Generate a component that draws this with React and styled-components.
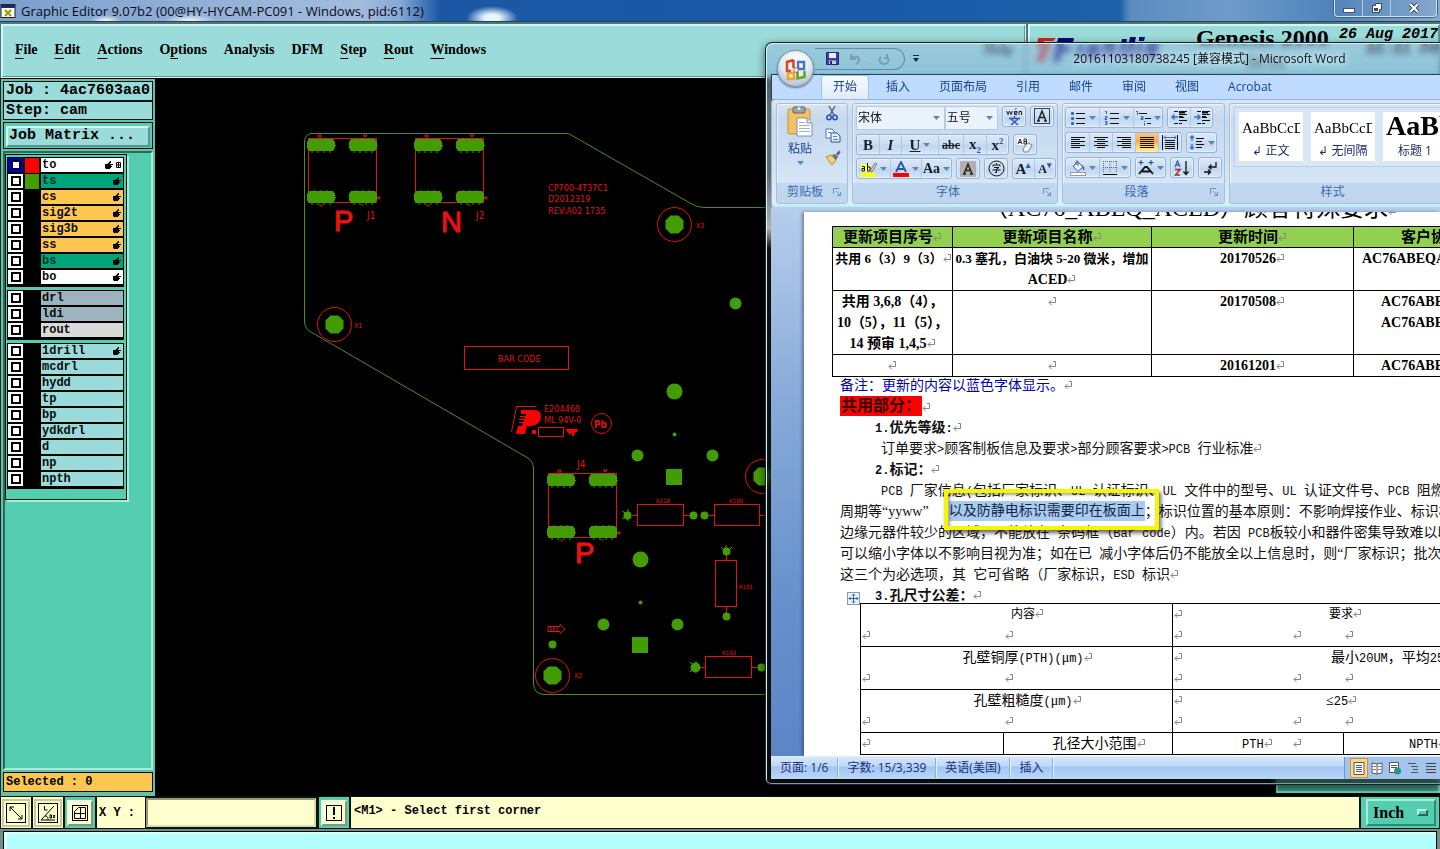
import React from 'react';
import styled, { createGlobalStyle, css } from 'styled-components';

const UI = '"Open Sans", "Noto Sans CJK SC", sans-serif';
const SERIF = '"Liberation Serif", "Noto Sans CJK SC", serif';
const MONO = '"Liberation Mono", "Noto Sans CJK SC", monospace';

const Global = createGlobalStyle`
  *, *::before, *::after { box-sizing: border-box; }
  body { margin: 0; background: #000; overflow: hidden; }
  button, input, select { font: inherit; color: inherit; margin: 0; padding: 0; border: 0; background: none; border-radius: 0; }
  h1, h2, h3, p { margin: 0; font: inherit; }
`;

/* ---------- Graphic Editor shell ---------- */

const Desktop = styled.div`
  position: relative;
  display: flex;
  flex-direction: column;
  height: 100vh;
  min-height: 600px;
  overflow: hidden;
  background: #000;
`;

const TitleBar = styled.header`
  display: flex;
  align-items: center;
  flex: none;
  height: 22px;
  gap: 5px;
  border-bottom: 1px solid #23405c;
  background:
    radial-gradient(ellipse 16px 6px at 106px 21px, #fff, transparent),
    radial-gradient(ellipse 26px 7px at 190px 21px, #f4f8fc, transparent),
    radial-gradient(ellipse 26px 12px at 492px 18px, #eaf4fc 30%, transparent),
    linear-gradient(90deg, #7ba0cd 0, #a3bcdd 25%, #86a9d6 400px, #1b57a5 440px, #1a5aa8 60%, #1c61a9 1120px, #5c8cc0 1130px, #6f9bc9 1230px, #4f83ba 1330px, #86a8cc 100%);
  font: 13px/20px ${UI};
  color: #0a0a14;
`;

const TitleText = styled.h1`
  flex: 1;
  white-space: nowrap;
`;

const WinButtons = styled.div`
  display: flex;
  align-self: flex-start;
  height: 17px;
  margin-right: 3px;
  border: 1px solid #d3e2f2;
  border-top: 0;
  border-radius: 0 0 4px 4px;
  box-shadow: 0 0 0 1px #3c608a;
`;

const WinButton = styled.button`
  display: grid;
  place-items: center;
  width: ${(p) => p.$w}px;
  border-left: ${(p) => (p.$first ? 0 : '1px solid #b4cbe3')};
`;

const MenuRow = styled.div`
  display: flex;
  flex: none;
  height: 57px;
  gap: 2px;
  background: #4d7877;
  border-bottom: 1px solid #000;
  padding: 2px 0 0 1px;
`;

const bevel = css`
  border: 2px solid;
  border-color: #d4f5f2 #5e9391 #5e9391 #d4f5f2;
`;

const MenuBar = styled.nav`
  flex: 1;
  display: flex;
  align-items: center;
  gap: 17px;
  padding: 0 11px 3px 12px;
  background: #9bdbd9;
  outline: 1px solid #d4f5f2;
  outline-offset: -1px;
  ${bevel}
  font: bold 14px/20px "Liberation Serif", serif;
`;

const MenuButton = styled.button`
  height: 20px;
  white-space: nowrap;
  margin-left: ${(p) => (p.$last ? 'auto' : 0)};
  u { text-decoration-thickness: 1px; text-underline-offset: 4px; }
`;

const Brand = styled.div`
  flex: none;
  width: 412px;
  display: grid;
  grid-template-columns: 166px 138px 1fr;
  align-items: start;
  background: #9bdbd9;
  overflow: hidden;
  ${bevel}
`;

const BrandLogo = styled.svg`
  margin: 9px 0 0 6px;
`;

const Product = styled.div`
  font: bold 24px/25px "Liberation Serif", serif;
  white-space: nowrap;
  small { display: block; font-size: 14px; line-height: 24px; text-align: center; }
`;

const Clock = styled.time`
  font: italic bold 15px/16px ${MONO};
  padding: 1px 0 0 0;
  text-align: right;
  white-space: nowrap;
`;

const Work = styled.div`
  flex: 1;
  min-height: 0;
  display: flex;
`;

const Sidebar = styled.aside`
  flex: none;
  width: 155px;
  display: flex;
  flex-direction: column;
  padding: 2px 2px 4px 2px;
  gap: 2px;
  background: #6bbfa9;
  border-left: 1px solid #0d2b24;
`;

const InfoBox = styled.div`
  flex: none;
  height: ${(p) => p.$h || 19}px;
  margin-bottom: ${(p) => (p.$joined ? -2 : 0)}px;
  padding-left: 2px;
  border: 1px solid #04140f;
  background: ${(p) => p.$bg || '#9bdbd9'};
  font: bold ${(p) => p.$size || 15}px/${(p) => (p.$h || 19) - 2}px ${MONO};
  white-space: nowrap;
  overflow: hidden;
`;

const MatrixWell = styled.div`
  flex: none;
  padding: 2px;
  height: 27px;
  border: 1px solid #04140f;
  background: #54cdb0;
`;

const MatrixButton = styled.button`
  width: 100%;
  height: 21px;
  text-align: left;
  padding-left: 1px;
  background: #9bdbd9;
  font: bold 15px/16px ${MONO};
  ${bevel}
`;

const LayerPanel = styled.div`
  flex: 1;
  min-height: 0;
  border: 2px solid;
  border-color: #2b6b5c #a5eed9 #a5eed9 #2b6b5c;
  background: #54cdb0;
  padding: 1px 0 0 0;
`;

const LayerFrame = styled.div`
  width: 122px;
  padding: 2px 2px 10px 1px;
  display: flex;
  flex-direction: column;
  gap: 3px;
  border: 1px solid #04140f;
  box-shadow: 2px 2px 0 #a5eed9;
`;

const LayerGroup = styled.ul`
  margin: 0;
  padding: 1px;
  list-style: none;
  background: #000;
`;

const LayerRow = styled.li`
  display: grid;
  grid-template-columns: 15px 14px 1fr;
  column-gap: 2px;
  height: 16px;
  padding-bottom: 1px;
`;

const LayerTick = styled.input`
  appearance: none;
  width: 15px;
  height: 14px;
  display: grid;
  place-items: center;
  background: ${(p) => (p.$on ? '#0000b8' : '#fff')};
  &::before {
    content: '';
    width: 10px;
    height: 10px;
    background: #fff;
    border: 2px solid ${(p) => (p.$on ? '#00003c' : '#000')};
  }
`;

const Swatch = styled.span`
  background: ${(p) => p.$color || '#000'};
`;

const LayerName = styled.label`
  display: flex;
  align-items: center;
  gap: 3px;
  padding: 0 2px 0 1px;
  background: ${(p) => p.$bg};
  font: bold 12px/14px ${MONO};
  color: ${(p) => (p.$dim ? '#06301f' : '#0c0c0c')};
  height: 14px;
  span { flex: 1; }
`;

const Canvas = styled.main`
  flex: 1;
  min-width: 0;
  background: #000;
  svg { display: block; }
`;

const RightPanel = styled.div`
  flex: none;
  width: 164px;
  margin-bottom: 3px;
  background: #419f8a;
  border: 2px solid #6fd3bd;
`;

const CommandBar = styled.footer`
  flex: none;
  display: flex;
  gap: 2px;
  height: 33px;
  padding: 1px 1px 1px 1px;
  background: #04140f;
  font: bold 12px/28px ${MONO};
`;

const Tool = styled.button`
  width: 30px;
  display: grid;
  place-items: center;
  background: ${(p) => (p.$teal ? '#54cdb0' : '#ffffcd')};
  svg {
    box-sizing: content-box;
    padding: 1px;
    background: #ffffcd;
    border: 2px solid;
    border-color: ${(p) => (p.$teal ? '#e6ffe6 #7f9a78 #7f9a78 #e6ffe6' : '#c8c898')};
  }
`;

const XYField = styled.label`
  display: flex;
  align-items: center;
  gap: 10px;
  padding-left: 2px;
  background: #ffffcd;
  white-space: pre;
`;

const XYInput = styled.input`
  width: 172px;
  height: 31px;
  padding: 0 6px;
  border: 3px solid;
  border-color: #98987a #dcdcb0 #dcdcb0 #98987a;
  outline: 1px solid #04140f;
  outline-offset: -1px;
  background: #ffffcd;
`;

const Message = styled.output`
  flex: 1;
  min-width: 0;
  background: #ffffcd;
  padding-left: 3px;
  white-space: nowrap;
`;

const UnitWell = styled.div`
  flex: none;
  width: 78px;
  background: #54cdb0;
  padding: 2px 3px 2px 5px;
`;

const UnitBox = styled.div`
  display: flex;
  align-items: center;
  height: 27px;
  padding-right: 6px;
  border: 2px solid;
  border-color: #a5eed9 #2b8a72 #2b8a72 #a5eed9;
  &::after {
    content: '';
    width: 11px;
    height: 7px;
    border: 2px solid;
    border-color: #b9f5e4 #1f6b58 #1f6b58 #b9f5e4;
  }
`;

const UnitSelect = styled.select`
  flex: 1;
  min-width: 0;
  appearance: none;
  padding-left: 5px;
  font: bold 16px/20px "Liberation Serif", serif;
`;

const BottomStrip = styled.div`
  flex: none;
  height: 20px;
  padding: 2px 3px 0 3px;
  background: #6f8f8f;
  div {
    height: 18px;
    border: solid #000;
    border-width: 1px 1px 0 1px;
    box-shadow: inset 3px 2px 0 #dcffff;
    background: #b3fffe;
  }
`;

/* ---------- Word window ---------- */

const WordWindow = styled.section`
  position: absolute;
  left: 765px;
  right: 0;
  top: 42px;
  bottom: 64px;
  display: flex;
  flex-direction: column;
  padding: 0 0 5px 5px;
  overflow: hidden;
  border: 1px solid #18222a;
  border-right: 0;
  border-radius: 7px 0 0 6px;
  box-shadow: inset 1px 1px 0 #d8f2f6, inset 0 -1px 0 #8c979c, 0 3px 8px rgba(0, 0, 0, .6);
  background: linear-gradient(180deg, rgba(150, 185, 220, .5) 0, rgba(130, 175, 220, .5) 30px, rgba(110, 122, 122, .9) 70px, rgba(105, 115, 115, .9) 130px, rgba(190, 200, 200, .9) 185px, rgba(14, 20, 22, .8) 206px, rgba(14, 20, 22, .6) 100%);
  backdrop-filter: blur(3px);
  font: 12px/16px ${UI};
  color: #15428b;
`;

const WordTitle = styled.div`
  flex: none;
  display: flex;
  align-items: center;
  height: 31px;
  padding-left: 44px;
`;

const QuickBar = styled.div`
  display: flex;
  align-items: center;
  gap: 10px;
  width: 90px;
  height: 22px;
  padding-left: 11px;
  border: 1px solid rgba(60, 95, 125, .55);
  border-left: 0;
  border-radius: 0 11px 11px 0;
  button { display: grid; }
`;

const WordCaption = styled.h2`
  flex: 1;
  padding-left: 54px;
  text-align: center;
  white-space: nowrap;
  color: #06121c;
  text-shadow: 0 0 6px rgba(255, 255, 255, .9), 0 0 10px rgba(255, 255, 255, .8);
`;

const OfficeButton = styled.button`
  position: absolute;
  left: 11px;
  top: 7px;
  width: 37px;
  height: 37px;
  display: grid;
  place-items: center;
  border-radius: 50%;
  border: 1px solid #7d8fa6;
  background: radial-gradient(circle at 50% 30%, #fff 0, #e8edf4 45%, #b4c2d4 80%, #eef3f9 100%);
  box-shadow: 0 1px 2px rgba(0, 0, 0, .5);
`;

const Tabs = styled.nav`
  flex: none;
  display: flex;
  height: 25px;
  padding: 0 0 0 49px;
  gap: 5px;
  border-top: 1px solid #23424c;
  border-left: 1px solid #23424c;
  background: #bfdbff;
`;

const Tab = styled.button`
  height: 24px;
  padding: 0 11px 2px;
  border: 1px solid ${(p) => (p.$active ? '#9dc3f2' : 'transparent')};
  border-bottom: 0;
  border-radius: 3px 3px 0 0;
  background: ${(p) => (p.$active ? 'linear-gradient(#f6faff, #dfebf9)' : 'none')};
  color: #15428b;
  white-space: nowrap;
`;

const Ribbon = styled.div`
  flex: none;
  display: flex;
  gap: 4px;
  height: 108px;
  padding: 3px 0 3px 4px;
  border: 1px solid #8db2e3;
  border-right: 0;
  border-bottom: 2px solid #b9f0fa;
  border-radius: 4px 0 0 4px;
  background: linear-gradient(#dbe7f5, #c6d9ee 18%, #cfe0f3 60%, #e0edfa);
`;

const Group = styled.section`
  flex: ${(p) => (p.$w ? 'none' : '1')};
  width: ${(p) => (p.$w ? p.$w + 'px' : 'auto')};
  min-width: 0;
  height: 101px;
  display: flex;
  flex-direction: column;
  overflow: hidden;
  border: 1px solid #a5bfdf;
  border-right-width: ${(p) => (p.$w ? 1 : 0)}px;
  border-radius: ${(p) => (p.$w ? '3px' : '3px 0 0 3px')};
  box-shadow: inset 1px 1px 0 rgba(255, 255, 255, .6);
`;

const GroupBody = styled.div`
  flex: 1;
  display: flex;
  flex-direction: ${(p) => (p.$col ? 'column' : 'row')};
  gap: ${(p) => p.$gap || 0}px;
  padding: ${(p) => p.$pad || '2px 3px 0'};
`;

const GroupLabel = styled.div`
  flex: none;
  display: flex;
  align-items: center;
  height: 20px;
  padding: 0 5px 2px 0;
  background: linear-gradient(#c0d8f1, #bfd5ee);
  color: #3e6aaa;
  h3 { flex: 1; text-align: center; white-space: nowrap; }
`;

const Tools = styled.div`
  display: flex;
  gap: 4px;
  height: ${(p) => p.$h || 21}px;
`;

const BtnSet = styled.div`
  flex: none;
  display: flex;
  height: 21px;
  border: 1px solid #94b4da;
  border-radius: 3px;
  background: linear-gradient(#dbe8f8, #cbdef3 48%, #bfd5ef 52%, #d3e5f8);
  box-shadow: inset 0 0 0 1px rgba(255, 255, 255, .45);
  overflow: hidden;
`;

const Btn = styled.button`
  display: flex;
  align-items: center;
  justify-content: center;
  gap: 3px;
  width: ${(p) => p.$w || 22}px;
  height: 19px;
  border-left: 1px solid #afc8e6;
  background: ${(p) => (p.$on ? 'linear-gradient(#fdc98a, #fba644 45%, #fec96c 60%, #fff0a0)' : 'none')};
  color: #1c1c24;
  font: ${(p) => p.$font || 'bold 15px/18px "Liberation Serif", serif'};
  &:first-child { border-left: 0; }
  sub, sup { font-size: 9px; line-height: 8px; color: #2a5bb0; }
`;

const Combo = styled.div`
  display: flex;
  align-items: center;
  width: ${(p) => p.$w}px;
  height: 24px;
  padding-right: 4px;
  margin-right: ${(p) => (p.$join ? -4 : 0)}px;
  border: 1px solid #b3cbe9;
  background: #eaf2fb;
  color: #111;
`;

const ComboSelect = styled.select`
  flex: 1;
  min-width: 0;
  appearance: none;
  padding-left: 1px;
  line-height: 18px;
`;

const PasteButton = styled.button`
  width: 46px;
  display: flex;
  flex-direction: column;
  align-items: center;
  gap: 4px;
  color: #15428b;
`;

const SideTools = styled.div`
  display: flex;
  flex-direction: column;
  gap: 5px;
  button { display: grid; height: 17px; }
`;

const Gallery = styled.div`
  flex: 1;
  display: flex;
  gap: 8px;
  height: 60px;
  padding: 4px;
  border: 1px solid #b9cfec;
  border-right: 0;
  background: #d9e6f6;
  overflow: hidden;
`;

const StyleCard = styled.button`
  flex: none;
  width: 64px;
  height: 49px;
  display: flex;
  flex-direction: column;
  align-items: center;
  background: #fff;
  overflow: hidden;
  color: #1c2b6b;
  b {
    width: 58px;
    height: 29px;
    overflow: hidden;
    text-align: left;
    white-space: nowrap;
    color: #000;
    font: ${(p) => (p.$big ? 'bold 28px/28px' : '15px/32px')} "Liberation Serif", serif;
  }
  span { white-space: nowrap; line-height: 19px; }
`;

const Viewport = styled.div`
  flex: 1;
  min-height: 0;
  display: flex;
  padding: 5px 0 0 33px;
  overflow: hidden;
  background: linear-gradient(180deg, #b6cdec 0, #a9c3e6 60px, #86a9d8 200px, #6690cb 400px, #5b85c6 100%);
`;

const Page = styled.article`
  flex: 1;
  min-width: 0;
  padding-left: 36px;
  overflow: hidden;
  background: #fff;
  box-shadow: -2px 0 3px rgba(30, 50, 90, .45);
  color: #000;
  font: 14px/21px ${SERIF};
`;

const DocTitle = styled.h2`
  height: 36px;
  margin-top: -22px;
  padding-left: 144px;
  font: 24px/36px ${SERIF};
  white-space: nowrap;
`;

const Line = styled.p`
  height: 21px;
  padding-left: ${(p) => p.$indent || 0}px;
  white-space: nowrap;
  font-weight: ${(p) => (p.$bold ? 'bold' : 'normal')};
  font-size: ${(p) => (p.$size || 14)}px;
  color: ${(p) => p.$color || '#111'};
`;

const Half = styled.span`
  font-family: ${MONO};
  font-size: 12px;
  line-height: 12px;
  white-space: pre;
`;

const RedMark = styled.mark`
  display: inline-block;
  height: 20px;
  line-height: 20px;
  padding: 0 1px;
  background: #f00;
  color: #2c0000;
  vertical-align: top;
`;

const Selected = styled.span`
  position: relative;
  display: inline-block;
  height: 20px;
  line-height: 20px;
  margin-left: 20px;
  background: #a9cbee;
  color: #10264a;
  vertical-align: top;
  &::after {
    content: '';
    position: absolute;
    inset: -12px -14px -9px -5px;
    border: 4px solid #f6f600;
    box-shadow: 2px 3px 4px rgba(0, 0, 0, .6), inset 2px 2px 3px rgba(0, 0, 0, .35);
  }
`;

const RevTable = styled.table`
  table-layout: fixed;
  width: 700px;
  margin: 0 0 -2px -8px;
  border-collapse: collapse;
  text-align: center;
  font-weight: bold;
  th, td { padding: 0; border: 1px solid #000; vertical-align: top; white-space: nowrap; }
  th { height: 20px; line-height: 20px; font-size: 15px; background: #92d050; }
  td:last-child, th:last-child { text-align: left; }
`;

const Col = styled.col`
  width: ${(p) => p.$w}px;
`;

const Pad = styled.div`
  padding-left: ${(p) => p.$x || 0}px;
  font-size: ${(p) => p.$size || 14}px;
`;

const SpecTable = styled.table`
  table-layout: fixed;
  width: 640px;
  margin-left: 20px;
  border-collapse: collapse;
  td { padding: 0; border: 1px solid #000; vertical-align: top; white-space: nowrap; }
`;

const CellGrid = styled.div`
  display: grid;
  grid-template-columns: ${(p) => p.$cols};
  padding-left: 1px;
  line-height: 21px;
  height: 21px;
`;

const CellText = styled.div`
  height: 21px;
  text-align: center;
  padding-left: 22px;
  font-size: ${(p) => p.$size || 14}px;
`;

const HeadingRow = styled.div`
  display: flex;
  align-items: center;
  gap: 15px;
  padding-left: 7px;
  height: 21px;
  margin-bottom: -3px;
  svg { margin-top: 6px; }
`;

const StatusBar = styled.div`
  flex: none;
  display: flex;
  align-items: center;
  height: 23px;
  border-top: 1px solid #e4effd;
  background: linear-gradient(#d6e6fb, #c0d8f8 40%, #a5c6f2 45%, #b9d5fa);
  color: #15307a;
`;

const StatusItem = styled.span`
  padding: 0 9px;
  line-height: 20px;
  border-right: 1px solid #8fb0de;
  box-shadow: 1px 0 0 #e4effd;
  white-space: nowrap;
`;

const Views = styled.div`
  display: flex;
  align-items: center;
  margin-left: auto;
  padding-left: 5px;
  height: 22px;
  border-left: 1px solid #6f95cc;
  background: #a4c3ee;
`;

const ViewButton = styled.button`
  display: grid;
  place-items: center;
  width: 18px;
  height: 20px;
  border: 1px solid ${(p) => (p.$on ? '#c79443' : 'transparent')};
  background: ${(p) => (p.$on ? '#ffd78a' : 'none')};
`;

/* ---------- small drawings ---------- */

const Svg = ({ w = 16, h = 16, children, ...rest }) => (
  <svg width={w} height={h} viewBox={`0 0 ${w} ${h}`} fill="none" aria-hidden="true" {...rest}>{children}</svg>
);

const Arrow = () => <Svg w={7} h={4}><path d="M0 0h7L3.500 4z" fill="#5d84b8" /></Svg>;

const Launcher = () => (
  <Svg w={9} h={9}><path d="M.5 6V.5H6M3 3l4 4M7.500 4v3.500H4" stroke="#6c8fbf" /></Svg>
);

const Ret = () => (
  <svg width="9" height="9" viewBox="0 0 9 9" fill="none" aria-hidden="true">
    <path d="M5 .5h2.500v5H1M3.500 3L1 5.500 3.500 8" stroke="#858585" />
  </svg>
);

const Hand = () => (
  <Svg w={8} h={8}><path d="M0 3h2l2-1.500L5 0h1v2H5v1h3v1H6v1h1v1H6v1H5v1H1L0 7z" fill="#000" /></Svg>
);

const bars = (ys, c = '#111') => ys.map(([x1, x2, y]) => <path key={y + '-' + x1} d={`M${x1} ${y}.5H${x2}`} stroke={c} />);

const BulletIcon = () => (
  <Svg>{[2, 7, 12].map((y) => <rect key={y} x="1" y={y} width="3" height="3" rx="1" fill="#3a64a8" />)}{bars([[6, 15, 3], [6, 15, 8], [6, 15, 13]])}</Svg>
);
const NumberIcon = () => (
  <Svg><path d="M1 1.500h1.500V4M1 6.500h2v1.500H1v1.500h2M1 11.500h2v3H1M1 13h2" stroke="#3a64a8" />{bars([[6, 15, 3], [6, 15, 8], [6, 15, 13]])}</Svg>
);
const MultiIcon = () => (
  <Svg><path d="M1 1.500h1.500V5M6 6.500h2v3H6V8h2M9.500 11v1M9.500 13v2.500" stroke="#3a64a8" />{bars([[4, 12, 3], [10, 16, 8], [12, 16, 13]])}</Svg>
);
const IndentIcon = ({ right }) => (
  <Svg>{bars([[3, 7, 1], [8, 16, 1], [8, 16, 4], [8, 13, 7], [8, 16, 10], [3, 7, 13], [8, 11, 13]])}
    <path d="M8 2.500h6M8 7h4" stroke="#111" strokeWidth="2" />
    <path d={right ? 'M0 7h6M3.500 4.500L6 7 3.500 9.500' : 'M7 7H1M3.500 4.500L1 7l2.500 2.500'} stroke="#3a6fc8" strokeWidth="1.500" /></Svg>
);
const AlignIcon = ({ kind }) => {
  const map = {
    left: [[1, 15, 2], [1, 10, 4], [1, 15, 6], [1, 10, 8], [1, 15, 10], [1, 10, 12]],
    center: [[1, 15, 2], [4, 12, 4], [1, 15, 6], [4, 12, 8], [1, 15, 10], [4, 12, 12]],
    right: [[1, 15, 2], [6, 15, 4], [1, 15, 6], [6, 15, 8], [1, 15, 10], [6, 15, 12]],
    full: [[1, 15, 2], [1, 15, 4], [1, 15, 6], [1, 15, 8], [1, 15, 10], [1, 15, 12]],
    spread: [[3, 13, 5], [3, 13, 7], [3, 13, 9], [3, 13, 11], [3, 13, 13]],
  };
  return (
    <Svg>{bars(map[kind])}
      {kind === 'spread' && <path d="M.5 0v15M15.500 0v15" stroke="#111" />}
      {kind === 'spread' && <path d="M2 2.500h12M4 .5l-2 2 2 2M12 .5l2 2-2 2" stroke="#3a6fc8" />}
    </Svg>
  );
};
const SpacingIcon = () => (
  <Svg>{bars([[7, 15, 3], [7, 13, 6], [7, 15, 9], [7, 13, 12]])}<path d="M3 1v5M1 3l2-2 2 2M3 9v5M1 12l2 2 2-2" stroke="#3a6fc8" strokeWidth="1.500" /></Svg>
);
const BucketIcon = () => (
  <Svg><path d="M3 6l5-4 5 5-5 4.500z" fill="#e8eef8" stroke="#3f5f90" /><path d="M6 5V1.500c1-1 2-.5 2 .5v4" stroke="#3f5f90" /><path d="M12 5c2 1 3 3 2 6-1-2-2-3-2-6z" fill="#2f68c0" /><rect x=".5" y="12.500" width="15" height="3" fill="#fff" stroke="#999" /></Svg>
);
const BorderIcon = () => (
  <Svg><path d="M1.500 1v12M8 1v12M14.500 1v12M1 1.500h14M1 7.500h14" stroke="#667" strokeDasharray="1 1" /><path d="M1 14.500h14" stroke="#111" /></Svg>
);
const AsianIcon = () => (
  <Svg><path d="M1 14l6-7h2l6 7M4 11.500h8" stroke="#111" strokeWidth="1.800" /><path d="M3 0v5M.5 2.500h5M13 0v5M10.500 2.500h5" stroke="#1a3fae" /></Svg>
);
const SortIcon = () => (
  <Svg><path d="M1 7l2.500-6L6 7M2 5h3" stroke="#2f5fc0" strokeWidth="1.300" /><path d="M1 9.500h5L1.500 15H6" stroke="#b02828" strokeWidth="1.500" /><path d="M12 1v13M9.500 11.500L12 14.500l2.500-3" stroke="#111" strokeWidth="1.300" /></Svg>
);
const MarksIcon = () => (
  <Svg><path d="M14 2v5H7M9.500 4.500L7 7l2.500 2.500M2 12h6M6 9.500L8.500 12 6 14.500" stroke="#111" strokeWidth="1.300" /></Svg>
);
const EraserIcon = () => (
  <Svg><path d="M0 1h11v7H0z" fill="#fff" /><path d="M1 7l2-5 2 5M2 5.500h2M7 2v5h2.500V2zM7 4.500h2" stroke="#223" /><path d="M6 12l5-6 4 2-4 7H7z" fill="#f2f4fa" stroke="#7084a8" /></Svg>
);
const HighlightIcon = () => (
  <Svg><path d="M0 3h9v8H0z" fill="#ff6" /><path d="M1 5.500h2.500V10H1V7.500h2.500M6.500 2v8H9V6H6.500" stroke="#111" /><path d="M9 10l5-8 2 1-5 8z" fill="#c9d2e2" stroke="#556" strokeWidth=".7" /><path d="M0 12h15v4H0z" fill="#ff0" /></Svg>
);
const FontColorIcon = () => (
  <Svg><path d="M3 11L8 1l5 10M5 8h6" stroke="#2c55a0" strokeWidth="1.800" /><path d="M0 12h16v4H0z" fill="#f00" /></Svg>
);
const PhoneticIcon = () => (
  <Svg w={17} h={18}><path d="M.5 3l1.500 3.500 1.500-3.500L5 6.500 6.500 3M11 6.500H8.500v-3H11V5H8.500M9 1.500L10.500 0M13 7V3.500h2.500V7" stroke="#222" /><path d="M8.500 8v2M3 10.500h11M5 11l7 6M12 11l-7 6" stroke="#2c5ac4" strokeWidth="1.500" /></Svg>
);
const CircleCharIcon = () => (
  <Svg w={17} h={17}><circle cx="8.500" cy="8.500" r="7.500" stroke="#111" /><path d="M8.500 3v1.500M5 6.500V5h7v1.500M6 7.500h5L8.500 9v3.500H7M4.500 10h8" stroke="#111" /></Svg>
);
const PasteIcon = () => (
  <Svg w={26} h={31}>
    <rect x="1" y="3" width="22" height="25" rx="1.500" fill="#f2c263" stroke="#c1913a" />
    <rect x="6" y="1" width="12" height="6" rx="1" fill="#9aa3ad" stroke="#5c646d" /><circle cx="12" cy="2.500" r="1.500" fill="#eee" />
    <path d="M10 12h10l5 5v13H10z" fill="#fff" stroke="#7d90b0" /><path d="M20 12v5h5" fill="#dde7f5" stroke="#7d90b0" />
    {bars([[12, 18, 16], [12, 23, 19], [12, 23, 22], [12, 23, 25]], '#9fb3d2')}
  </Svg>
);
const CutIcon = () => (
  <Svg w={15} h={15}><path d="M4 0l5 9M10 0L5 9" stroke="#52657f" strokeWidth="1.500" /><circle cx="4" cy="11.500" r="2.200" stroke="#2454b8" strokeWidth="1.600" /><circle cx="10" cy="11.500" r="2.200" stroke="#2454b8" strokeWidth="1.600" /></Svg>
);
const CopyIcon = () => (
  <Svg w={16} h={15}><path d="M1 1h6l2 2v7H1z" fill="#fff" stroke="#4c6fae" /><path d="M6 5h6l3 3v6H6z" fill="#eaf2fd" stroke="#2454b8" />{bars([[3, 6, 4], [8, 12, 8], [8, 13, 11]], '#4c7fd0')}</Svg>
);
const BrushIcon = () => (
  <Svg w={16} h={15}><path d="M1 7l5-2 5 5-4 5z" fill="#f3d36e" stroke="#b48a24" /><path d="M7 5l3-1 3 3-2 3z" fill="#6c6c74" /><path d="M11 4l3-3.500L15.500 2 13 6z" fill="#5a4fa8" /></Svg>
);
const SaveIcon = () => (
  <Svg w={13} h={13}><path d="M.5.5h12v12H.5z" fill="#3d3fa8" stroke="#26286e" /><path d="M3 1h7v5H3z" fill="#eef" /><path d="M3 8.500h7V12H3z" fill="#c8ccdf" /><path d="M4 9h2v3H4z" fill="#26286e" /></Svg>
);
const UndoIcon = () => <Svg w={19} h={12}><path d="M2 1v5h5M2 6c3-4 8-3 8 1 0 2-1 3-3 4" stroke="#7d9cb8" strokeWidth="2" /><path d="M14 5h5l-2.500 3z" fill="#a9c6dc" /></Svg>;
const RedoIcon = () => <Svg w={12} h={12}><path d="M9 1v4H6M9 4c3 3 1 7-3 7S0 7 3 4" stroke="#7d9cb8" strokeWidth="2" /></Svg>;
const OfficeLogo = () => (
  <Svg w={24} h={26}>
    <path d="M9.500 4L3 6v9h4M9.500 4v8" stroke="#d8481c" strokeWidth="2.600" />
    <path d="M14 6h6v7h-6z" stroke="#3b78c6" strokeWidth="2.400" />
    <path d="M4 17h6v6H4z" stroke="#f0a51c" strokeWidth="2.400" />
    <path d="M13.500 15.500v7l7-1.500v-6" stroke="#5fa52c" strokeWidth="2.600" />
    <path d="M10 12h4v4h-4z" fill="#fff" stroke="#c44" strokeWidth=".8" />
  </Svg>
);
const EditorIcon = () => (
  <Svg w={16} h={14}><rect x="1" y=".5" width="14" height="13" fill="#fffff0" stroke="#222" /><path d="M1 1h14v3H1z" fill="#1d2a66" /><path d="M5 6l6 6M11 6l-6 6" stroke="#9a9a10" strokeWidth="2" /></Svg>
);
const SnapIcon = () => <Svg w={22} h={22}><rect x="1.500" y="1.500" width="19" height="19" stroke="#000" /><path d="M5 5l12 12M5 9V5h4M17 13v4h-4" stroke="#000" /></Svg>;
const AngleIcon = () => <Svg w={22} h={22}><rect x="1.500" y="1.500" width="19" height="19" stroke="#000" /><path d="M4 18L17 4M4 18h14M7.500 4v4h3M8 14c3 0 3 2 3 4M13 13h1.500v3H13zM16 13l2 3M18 13l-2 3" stroke="#000" /></Svg>;
const GridIcon = () => <Svg w={20} h={20}><rect x="2.500" y="2.500" width="15" height="15" stroke="#000" /><path d="M4.500 8.500l4-4h7v11h-11zM10.500 4v11M4 10.500h12" stroke="#000" /></Svg>;
const BangIcon = () => <Svg w={20} h={20}><rect x="2.500" y="2.500" width="15" height="15" stroke="#000" /><path d="M10 4v8M10 14v2" stroke="#000" strokeWidth="2" /></Svg>;

/* ---------- board drawing ---------- */

const RED = '#e01414';
const GREEN = '#449c04';

const BoardText = styled.text`
  font-family: "DejaVu Sans Condensed", "DejaVu Sans", sans-serif;
  font-size: ${(p) => p.$size}px;
  font-weight: ${(p) => (p.$bold ? 'bold' : 'normal')};
  fill: ${RED};
`;

const BoardLetter = styled.text`
  font: 29px "Liberation Sans", sans-serif;
  fill: #f01010;
  stroke: #f01010;
  stroke-width: 1px;
`;

const PadShape = ({ x, y }) => (
  <g fill={GREEN}>
    <path d={`M${x - 12} ${y - 6}h24l2 3v6l-2 3h-24l-2 -3v-6z`} />
    <path d={`M${x - 9} ${y}v8M${x - 3} ${y}v8M${x + 3} ${y}v8M${x + 9} ${y}v8M${x - 14} ${y + 0.5}h29M${x - 7} ${y - 7}v3M${x} ${y - 7}v3M${x + 6} ${y - 7}v3`} stroke={GREEN} />
  </g>
);

const Connector = ({ x, y }) => (
  <g>
    <rect x={x + 0.5} y={y + 0.5} width="68" height="64" fill="none" stroke={RED} />
    <path d={`M${x + 10} ${y - 3}h3v2h-3zM${x + 55} ${y - 3}h4l-2 2zM${x + 11} ${y + 67}h3v2M${x + 53} ${y + 67}h3M${x + 70} ${y + 59}h2v2h-2z`} stroke={RED} fill="none" />
    {[[13, 7], [55, 7], [13, 59], [55, 59]].map(([a, b]) => <PadShape key={`${a}-${b}`} x={x + a} y={y + b} />)}
  </g>
);

const Hole = ({ x, y }) => (
  <g>
    <circle cx={x + 0.5} cy={y + 0.5} r="17" fill="none" stroke={RED} />
    <path d={`M${x - 3.5} ${y - 8.5}h8l5 5v8l-5 5h-8l-5 -5v-8z`} fill={GREEN} />
  </g>
);

const dots = [[735, 303, 6], [674, 391, 8], [674, 434, 2], [637, 455, 6], [712, 455, 6], [640, 559, 8], [640, 602, 2], [603, 624, 6], [677, 624, 6], [552, 644, 4], [627, 515, 4], [693, 515, 4], [704, 515, 4], [726, 551, 4], [726, 616, 4], [695, 667, 5], [761, 667, 4]];

const Board = () => (
  <svg width="100%" height="100%" aria-label="PCB layout">
    <g transform="translate(-155 -79)">
      <path d="M311 133.500H568.500L690 203Q697 207.500 704 207.500H1200M311 133.500Q304.500 135 304.500 142V322Q305 329 311 332L527 457.500Q533.500 461 533.500 469V684Q534 694.500 545 694.500H1200" fill="none" stroke="#4c8c24" />
      <Connector x={308} y={138} />
      <Connector x={415} y={138} />
      <Connector x={548} y={473} />
      <Hole x={674} y={224} />
      <Hole x={334} y={324} />
      <Hole x={552} y={675} />
      <Hole x={762} y={476} />
      <g fill={GREEN}>
        {dots.map(([x, y, r]) => <circle key={`${x}-${y}`} cx={x + 0.5} cy={y + 0.5} r={r} />)}
        <rect x="666" y="469" width="16" height="16" />
        <rect x="632" y="637" width="16" height="16" />
        <path d="M622 511l3 2M622 519l3-2M628 509v12M721 547l3 3M732 547l-3 3M726 545v3M690 662l3 3M690 672l3-3M696 661v12" stroke={GREEN} />
      </g>
      <g fill="none" stroke={RED}>
        <rect x="464.500" y="346.500" width="104" height="23" />
        <rect x="637.500" y="504.500" width="46" height="21" />
        <rect x="714.500" y="504.500" width="45" height="21" />
        <rect x="715.500" y="560.500" width="21" height="46" />
        <rect x="705.500" y="656.500" width="46" height="21" />
        <path d="M632 515.500h5M684 515.500h6M708 515.500h6M760 515.500h6M726.500 555v5M726.500 607v6M700 667.500h5M752 667.500h6" />
        <path d="M511.500 432l5-25.500h20" />
        <circle cx="601.500" cy="423.500" r="10" />
        <rect x="538.500" y="427.500" width="25" height="9" />
        <path d="M548 626.500h12v-2l5 4.500-5 4.500v-2h-12zM551 627v4M554 627v4M557 627v4" />
      </g>
      <path d="M521 410h13q7 0 7 6 0 9-10 10h-4l-2 8h-9l2-8h4l1-3h-4v-1h5v-2h-5v-1h6v-2h-5v-1h6v-2h-5z" fill="#f00" />
      <path d="M532 430h4v4h-4zM566 429h12l-1 3h-2l-1 4h-2v-4l-2 3-4-5z" fill="#f00" />
      <BoardLetter x="334" y="231">P</BoardLetter>
      <BoardLetter x="441" y="232">N</BoardLetter>
      <BoardLetter x="575" y="563">P</BoardLetter>
      <BoardText x="367" y="219" $size={10}>J1</BoardText>
      <BoardText x="476" y="219" $size={10}>J2</BoardText>
      <BoardText x="577" y="468" $size={10}>J4</BoardText>
      <BoardText x="548" y="191" $size={9}>CP700-4T37C1</BoardText>
      <BoardText x="548" y="202" $size={9}>D2012319</BoardText>
      <BoardText x="548" y="214" $size={9}>REV:A02 1735</BoardText>
      <BoardText x="498" y="362" $size={9}>BAR CODE</BoardText>
      <BoardText x="544" y="412" $size={9}>E204460</BoardText>
      <BoardText x="544" y="423" $size={9}>ML 94V-0</BoardText>
      <BoardText x="594" y="428" $size={10} $bold>Pb</BoardText>
      <BoardText x="696" y="228" $size={7}>X3</BoardText>
      <BoardText x="354" y="328" $size={7}>X1</BoardText>
      <BoardText x="574" y="678" $size={7}>X2</BoardText>
      <BoardText x="656" y="503" $size={6}>R218</BoardText>
      <BoardText x="729" y="503" $size={6}>R189</BoardText>
      <BoardText x="739" y="589" $size={6}>R151</BoardText>
      <BoardText x="722" y="655" $size={6}>R193</BoardText>
    </g>
  </svg>
);

/* ---------- content ---------- */

const layers = [
  [
    { name: 'to', bg: '#fff', color: '#f00', on: true, hand: true, grid: true },
    { name: 'ts', bg: '#00a57c', color: '#449c04', hand: true, dim: true },
    { name: 'cs', bg: '#fdc74f', hand: true },
    { name: 'sig2t', bg: '#fdc74f', hand: true },
    { name: 'sig3b', bg: '#fdc74f', hand: true },
    { name: 'ss', bg: '#fdc74f', hand: true },
    { name: 'bs', bg: '#00a57c', hand: true, dim: true },
    { name: 'bo', bg: '#fff', hand: true },
  ],
  [
    { name: 'drl', bg: '#9bb4bd' },
    { name: 'ldi', bg: '#9bb4bd' },
    { name: 'rout', bg: '#d9d9d9' },
  ],
  ['1drill', 'mcdrl', 'hydd', 'tp', 'bp', 'ydkdrl', 'd', 'np', 'npth'].map((name, i) => ({ name, bg: '#9bdbd9', hand: i === 0 })),
];

const menus = [['', 'F', 'ile'], ['', 'E', 'dit'], ['', 'A', 'ctions'], ['O', 'p', 'tions'], ['Analysis', '', ''], ['DFM', '', ''], ['', 'S', 'tep'], ['', 'R', 'out'], ['', 'W', 'indows']];

const tabs = ['开始', '插入', '页面布局', '引用', '邮件', '审阅', '视图', 'Acrobat'];

const Mixed = ({ children }) =>
  children.split(/([\x20-\x7e]+)/).map((part, i) => (i % 2 ? <Half key={i}>{part}</Half> : part));

const LayerItem = ({ layer }) => (
  <LayerRow>
    <LayerTick type="checkbox" id={`layer-${layer.name}`} $on={layer.on} defaultChecked={layer.on} />
    <Swatch $color={layer.color} />
    <LayerName htmlFor={`layer-${layer.name}`} $bg={layer.bg} $dim={layer.dim}>
      <span>{layer.name}</span>
      {layer.hand && <Hand />}
      {layer.grid && <Svg w={5} h={6}><path d="M.5.5h4v5h-4zM2.500 0v6M0 3h5" stroke="#000" /></Svg>}
    </LayerName>
  </LayerRow>
);

const SpecRow = ({ left, right, size, start }) => (
  <tr>
    <td colSpan={2}>
      <CellText $size={size}><Mixed>{left}</Mixed><Ret /></CellText>
      <CellGrid $cols="143px 1fr"><span><Ret /></span><span><Ret /></span></CellGrid>
    </td>
    <td colSpan={2}>
      <CellGrid $cols={`${start}px 1fr`}><span><Ret /></span><Pad as="span" $size={size}><Mixed>{right}</Mixed><Ret /></Pad></CellGrid>
      <CellGrid $cols="119px 52px 1fr"><span><Ret /></span><span><Ret /></span><span><Ret /></span></CellGrid>
    </td>
  </tr>
);

const Document = () => (
  <Viewport>
    <Page>
      <DocTitle>（AC76_ABEQ_ACED）顾客特殊要求<Ret /></DocTitle>
      <RevTable>
        <colgroup><Col $w={120} /><Col $w={199} /><Col $w={202} /><col /></colgroup>
        <thead>
          <tr><th>更新项目序号<Ret /></th><th>更新项目名称<Ret /></th><th>更新时间<Ret /></th><th><Pad $x={47} $size={15}>客户协</Pad></th></tr>
        </thead>
        <tbody>
          <tr>
            <td><Pad $x={2} $size={13}>共用 6（3）9（3）<Ret /></Pad></td>
            <td><Pad $size={13}>0.3 塞孔，白油块 5-20 微米，增加</Pad>ACED<Ret /></td>
            <td>20170526<Ret /></td>
            <td><Pad $x={8}>AC76ABEQA</Pad></td>
          </tr>
          <tr>
            <td>共用 3,6,8（4），<br />10（5），11（5），<br />14 预审 1,4,5<Ret /></td>
            <td><Ret /></td>
            <td>20170508<Ret /></td>
            <td><Pad $x={27}>AC76ABEQ</Pad><Pad $x={27}>AC76ABEQ</Pad></td>
          </tr>
          <tr><td><Ret /></td><td><Ret /></td><td>20161201<Ret /></td><td><Pad $x={27}>AC76ABEQ</Pad></td></tr>
        </tbody>
      </RevTable>
      <Line $color="#0000b4">备注：更新的内容以蓝色字体显示。<Ret /></Line>
      <Line $bold $size={16}><RedMark>共用部分：</RedMark><Ret /></Line>
      <Line as="h3" $bold $indent={35}><Mixed>1.优先等级:</Mixed><Ret /></Line>
      <Line $indent={41}><Mixed>{'订单要求>顾客制板信息及要求>部分顾客要求>PCB 行业标准'}</Mixed><Ret /></Line>
      <Line as="h3" $bold $indent={35}><Mixed>2.标记：</Mixed><Ret /></Line>
      <Line $indent={41}><Mixed>PCB 厂家信息(包括厂家标识、UL 认证标识、UL 文件中的型号、UL 认证文件号、PCB 阻燃等</Mixed></Line>
      <Line>周期等“yyww”<Selected>以及防静电标识需要印在板面上</Selected>；标识位置的基本原则：不影响焊接作业、标识标</Line>
      <Line><Mixed>边缘元器件较少的区域，不能放在 条码框（Bar code）内。若因 PCB板较小和器件密集导致难以印</Mixed></Line>
      <Line><Mixed>可以缩小字体以不影响目视为准；如在已 减小字体后仍不能放全以上信息时，则“厂家标识；批次</Mixed></Line>
      <Line><Mixed>这三个为必选项，其 它可省略（厂家标识，ESD 标识</Mixed><Ret /></Line>
      <HeadingRow>
        <Svg w={13} h={13}><rect x=".5" y=".5" width="12" height="12" fill="#eef3fb" stroke="#8a9ab5" /><path d="M6.500 2v9M2 6.500h9M5 3.500L6.500 2 8 3.500M5 9.500L6.500 11 8 9.500M3.500 5L2 6.500 3.500 8M9.500 5L11 6.500 9.500 8" stroke="#2f5fb8" /></Svg>
        <Line as="h3" $bold><Mixed>3.孔尺寸公差：</Mixed><Ret /></Line>
      </HeadingRow>
      <SpecTable>
        <colgroup><Col $w={143} /><Col $w={169} /><Col $w={171} /><col /></colgroup>
        <tbody>
          <SpecRow left="内容" right="要求" size={12} start={155} />
          <SpecRow left="孔壁铜厚(PTH)(μm)" right="最小20UM，平均25" start={157} />
          <SpecRow left="孔壁粗糙度(μm)" right="≤25" start={152} />
          <tr>
            <td><CellGrid $cols="1fr"><span><Ret /></span></CellGrid></td>
            <td><CellText>孔径大小范围<Ret /></CellText></td>
            <td><CellGrid $cols="68px 51px 1fr"><span /><span><Mixed>PTH</Mixed><Ret /></span><span><Ret /></span></CellGrid></td>
            <td><Pad $x={65}><Mixed>NPTH</Mixed><Ret /></Pad></td>
          </tr>
        </tbody>
      </SpecTable>
    </Page>
  </Viewport>
);

const FontGroup = () => (
  <Group $w={206}>
    <GroupBody $col $gap={3}>
      <Tools $h={25}>
        <Combo $w={90} $join>
          <ComboSelect aria-label="字体名称" defaultValue="宋体"><option>宋体</option></ComboSelect><Arrow />
        </Combo>
        <Combo $w={54}>
          <ComboSelect aria-label="字号" defaultValue="五号"><option>五号</option></ComboSelect><Arrow />
        </Combo>
        <BtnSet><Btn aria-label="拼音指南"><PhoneticIcon /></Btn></BtnSet>
        <BtnSet><Btn aria-label="字符边框"><Svg w={18} h={17}><rect x="1.500" y=".5" width="15" height="15" stroke="#345" /><path d="M5 13l4-10 4 10M4 13h3M11 13h3M6.500 9.500h5" stroke="#222" strokeWidth="1.500" /></Svg></Btn></BtnSet>
      </Tools>
      <Tools>
        <BtnSet>
          <Btn>B</Btn>
          <Btn><i>I</i></Btn>
          <Btn $w={37}><u>U</u><Arrow /></Btn>
          <Btn $w={25} $font={'bold 12px/18px "Liberation Serif", serif'}><s>abc</s></Btn>
          <Btn $w={23}><span>x<sub>2</sub></span></Btn>
          <Btn><span>x<sup>2</sup></span></Btn>
        </BtnSet>
        <BtnSet><Btn aria-label="清除格式"><EraserIcon /></Btn></BtnSet>
      </Tools>
      <Tools>
        <BtnSet>
          <Btn $w={33} aria-label="突出显示"><HighlightIcon /><Arrow /></Btn>
          <Btn $w={31} aria-label="字体颜色"><FontColorIcon /><Arrow /></Btn>
          <Btn $w={30} $font={'bold 14px/18px "Liberation Serif", serif'}>Aa<Arrow /></Btn>
        </BtnSet>
        <BtnSet><Btn aria-label="字符底纹"><Svg><rect width="16" height="16" fill="#b4b0b0" /><path d="M4 13L8 3l4 10M3 13h3M10 13h3M5.500 9.500h5" stroke="#222" strokeWidth="1.500" /></Svg></Btn></BtnSet>
        <BtnSet><Btn aria-label="带圈字符"><CircleCharIcon /></Btn></BtnSet>
        <BtnSet>
          <Btn $w={21}><span>A<sup>▴</sup></span></Btn>
          <Btn $w={21} $font={'bold 12px/18px "Liberation Serif", serif'}><span>A<sup>▾</sup></span></Btn>
        </BtnSet>
      </Tools>
    </GroupBody>
    <GroupLabel><h3>字体</h3><Launcher /></GroupLabel>
  </Group>
);

const ParagraphGroup = () => (
  <Group $w={163}>
    <GroupBody $col $gap={4} $pad="3px 2px 0">
      <Tools>
        <BtnSet>
          <Btn $w={33} aria-label="项目符号"><BulletIcon /><Arrow /></Btn>
          <Btn $w={34} aria-label="编号"><NumberIcon /><Arrow /></Btn>
          <Btn $w={29} aria-label="多级列表"><MultiIcon /><Arrow /></Btn>
        </BtnSet>
        <BtnSet><Btn aria-label="减少缩进"><IndentIcon /></Btn><Btn aria-label="增加缩进"><IndentIcon right /></Btn></BtnSet>
      </Tools>
      <Tools>
        <BtnSet>
          {['left', 'center', 'right', 'full', 'spread'].map((k) => <Btn key={k} $w={23} $on={k === 'full'} aria-label={k}><AlignIcon kind={k} /></Btn>)}
        </BtnSet>
        <BtnSet><Btn $w={29} aria-label="行距"><SpacingIcon /><Arrow /></Btn></BtnSet>
      </Tools>
      <Tools>
        <BtnSet><Btn $w={33} aria-label="底纹"><BucketIcon /><Arrow /></Btn><Btn $w={31} aria-label="边框"><BorderIcon /><Arrow /></Btn></BtnSet>
        <BtnSet><Btn $w={29} aria-label="中文版式"><AsianIcon /><Arrow /></Btn></BtnSet>
        <BtnSet><Btn aria-label="排序"><SortIcon /></Btn></BtnSet>
        <BtnSet><Btn aria-label="编辑标记"><MarksIcon /></Btn></BtnSet>
      </Tools>
    </GroupBody>
    <GroupLabel><h3>段落</h3><Launcher /></GroupLabel>
  </Group>
);

const Word = () => (
  <WordWindow>
    <WordTitle>
      <QuickBar>
        <button aria-label="保存"><SaveIcon /></button>
        <button aria-label="撤消"><UndoIcon /></button>
        <button aria-label="重复"><RedoIcon /></button>
      </QuickBar>
      <Svg w={20} h={8}><path d="M8 .5h6" stroke="#123" /><path d="M8 3h6l-3 4z" fill="#123" /></Svg>
      <WordCaption>20161103180738245 [兼容模式] - Microsoft Word</WordCaption>
    </WordTitle>
    <Tabs>{tabs.map((t, i) => <Tab key={t} $active={i === 0}>{t}</Tab>)}</Tabs>
    <Ribbon>
      <Group $w={72}>
        <GroupBody $gap={2} $pad="2px 0 0 0">
          <PasteButton><PasteIcon /><span>粘贴</span><Arrow /></PasteButton>
          <SideTools>
            <button aria-label="剪切"><CutIcon /></button>
            <button aria-label="复制"><CopyIcon /></button>
            <button aria-label="格式刷"><BrushIcon /></button>
          </SideTools>
        </GroupBody>
        <GroupLabel><h3>剪贴板</h3><Launcher /></GroupLabel>
      </Group>
      <FontGroup />
      <ParagraphGroup />
      <Group>
        <GroupBody $pad="3px 0 0 4px">
          <Gallery>
            <StyleCard><b>AaBbCcDd</b><span>↲ 正文</span></StyleCard>
            <StyleCard><b>AaBbCcDd</b><span>↲ 无间隔</span></StyleCard>
            <StyleCard $big><b>AaBb</b><span>标题 1</span></StyleCard>
          </Gallery>
        </GroupBody>
        <GroupLabel><h3>样式</h3></GroupLabel>
      </Group>
    </Ribbon>
    <Document />
    <StatusBar>
      <StatusItem>页面: 1/6</StatusItem>
      <StatusItem>字数: 15/3,339</StatusItem>
      <StatusItem>英语(美国)</StatusItem>
      <StatusItem>插入</StatusItem>
      <Views>
        <ViewButton $on aria-label="页面视图"><Svg w={12} h={13}><path d="M1 .5h10v12H1z" fill="#fff" stroke="#555" />{bars([[3, 9, 3], [3, 9, 5], [3, 9, 7], [3, 9, 9]], '#555')}</Svg></ViewButton>
        <ViewButton aria-label="阅读版式"><Svg w={12} h={13}><path d="M6 2L1 1v10l5 1 5-1V1zM6 2v10" fill="#fff" stroke="#555" />{bars([[2, 5, 4], [7, 10, 4], [2, 5, 7], [7, 10, 7]], '#777')}</Svg></ViewButton>
        <ViewButton aria-label="Web 版式"><Svg w={12} h={13}><path d="M.5.5h9v10h-9z" fill="#fff" stroke="#555" />{bars([[2, 8, 3], [2, 8, 5]], '#555')}<circle cx="8.500" cy="9" r="3.500" fill="#2f8f8a" /></Svg></ViewButton>
        <ViewButton aria-label="大纲"><Svg w={12} h={13}>{bars([[1, 9, 1], [4, 11, 4], [6, 11, 7], [4, 11, 10]], '#555')}</Svg></ViewButton>
        <ViewButton aria-label="草稿"><Svg w={12} h={13}>{bars([[1, 11, 1], [1, 11, 4], [1, 11, 7], [1, 11, 10]], '#444')}</Svg></ViewButton>
      </Views>
    </StatusBar>
    <OfficeButton aria-label="Office"><OfficeLogo /></OfficeButton>
  </WordWindow>
);

export default function App() {
  return (
    <Desktop>
      <Global />
      <TitleBar>
        <EditorIcon />
        <TitleText>Graphic Editor 9.07b2 (00@HY-HYCAM-PC091 - Windows, pid:6112)</TitleText>
        <WinButtons>
          <WinButton $w={27} $first aria-label="Minimize"><Svg w={12} h={12}><rect x=".5" y="6.500" width="11" height="4" fill="#fff" stroke="#456" /></Svg></WinButton>
          <WinButton $w={28} aria-label="Restore"><Svg w={12} h={12}><path d="M4.500 1.500h6v6h-2v3h-7v-7h3z" fill="#fff" stroke="#345" /><rect x="3.500" y="6.500" width="3" height="2" fill="#567" stroke="#345" /></Svg></WinButton>
          <WinButton $w={46} aria-label="Close"><Svg w={12} h={12}><path d="M2 2l8 8M10 2l-8 8" stroke="#345" strokeWidth="4" /><path d="M2 2l8 8M10 2l-8 8" stroke="#fff" strokeWidth="2.200" /></Svg></WinButton>
        </WinButtons>
      </TitleBar>
      <MenuRow>
        <MenuBar>
          {menus.map(([a, u, b]) => <MenuButton key={a + u + b}>{a}{u && <u>{u}</u>}{b}</MenuButton>)}
          <MenuButton $last>Help</MenuButton>
        </MenuBar>
        <Brand>
          <BrandLogo width="130" height="30" viewBox="0 0 130 30" aria-hidden="true">
            <path d="M2 3h18l-3 3H8l-1 3h8l-8 18H0l6-15H1z" fill="#d8231c" />
            <path d="M22 3h16l-1 5h-9l-1 4h8l-1 5h-8l-3 10h-6zM42 10h6l-3 14h-5zM52 10h12l-3 14h-12zM68 9h12l-3 15h-5l2-10h-4l-2 10h-4zM86 4h5l-4 20h-5zM94 2h6l-5 22h-5zM103 2h6l-1 4h-5zM102 9h5l-3 15h-5zM111 9h12l-3 15h-12z" fill="#0a0a78" />
          </BrandLogo>
          <Product>Genesis 2000<small>9.07b2</small></Product>
          <Clock>26 Aug 2017<br />05:01 PM</Clock>
        </Brand>
      </MenuRow>
      <Work>
        <Sidebar>
          <InfoBox $joined $h={20}>Job : 4ac7603aa0</InfoBox>
          <InfoBox>Step: cam</InfoBox>
          <MatrixWell><MatrixButton>Job Matrix ...</MatrixButton></MatrixWell>
          <LayerPanel>
            <LayerFrame>
              {layers.map((group) => (
                <LayerGroup key={group[0].name}>{group.map((l) => <LayerItem key={l.name} layer={l} />)}</LayerGroup>
              ))}
            </LayerFrame>
          </LayerPanel>
          <InfoBox $h={20} $size={12} $bg="#fdc74f">Selected : 0</InfoBox>
        </Sidebar>
        <Canvas><Board /></Canvas>
        <RightPanel />
      </Work>
      <CommandBar>
        <Tool aria-label="Snap"><SnapIcon /></Tool>
        <Tool aria-label="Angle"><AngleIcon /></Tool>
        <Tool $teal aria-label="Grid"><GridIcon /></Tool>
        <XYField>X Y :<XYInput type="text" /></XYField>
        <Tool $teal aria-label="Alert"><BangIcon /></Tool>
        <Message>{'<M1> - Select first corner'}</Message>
        <UnitWell>
          <UnitBox><UnitSelect aria-label="Units" defaultValue="Inch"><option>Inch</option></UnitSelect></UnitBox>
        </UnitWell>
      </CommandBar>
      <BottomStrip><div /></BottomStrip>
      <Word />
    </Desktop>
  );
}
